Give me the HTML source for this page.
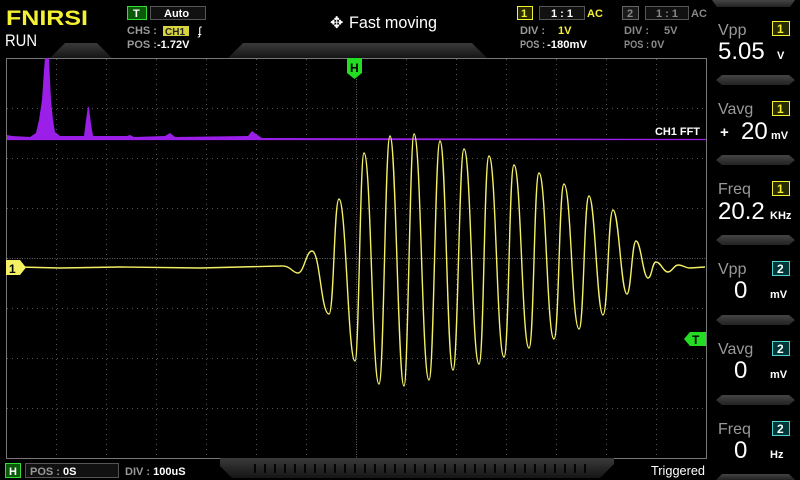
<!DOCTYPE html>
<html><head><meta charset="utf-8"><style>
html,body{margin:0;padding:0;background:#000;width:800px;height:480px;overflow:hidden}
svg{display:block}
text{font-family:"Liberation Sans",sans-serif}
</style></head><body>
<svg width="800" height="480" viewBox="0 0 800 480" xmlns="http://www.w3.org/2000/svg">
<defs>
<linearGradient id="tab" x1="0" y1="0" x2="0" y2="1"><stop offset="0" stop-color="#3a3a3a"/><stop offset="1" stop-color="#151515"/></linearGradient>
<linearGradient id="sep" x1="0" y1="0" x2="0" y2="1"><stop offset="0" stop-color="#444"/><stop offset="1" stop-color="#222"/></linearGradient>
<pattern id="tk" x="0" y="0" width="10" height="20" patternUnits="userSpaceOnUse"><rect x="4" y="4" width="2" height="9" fill="#050505"/></pattern>
</defs>
<rect width="800" height="480" fill="#000"/>
<polygon points="50,58 65,43 97,43 112,58" fill="url(#tab)"/>
<polygon points="228,58 243,43 472,43 487,58" fill="url(#tab)"/>
<polygon points="712,0 795,0 790,7 717,7" fill="url(#sep)"/>
<g stroke="#555" stroke-width="1" stroke-dasharray="1,4">
<line x1="56.5" y1="59" x2="56.5" y2="458"/><line x1="106.5" y1="59" x2="106.5" y2="458"/><line x1="156.5" y1="59" x2="156.5" y2="458"/><line x1="206.5" y1="59" x2="206.5" y2="458"/><line x1="256.5" y1="59" x2="256.5" y2="458"/><line x1="306.5" y1="59" x2="306.5" y2="458"/><line x1="406.5" y1="59" x2="406.5" y2="458"/><line x1="456.5" y1="59" x2="456.5" y2="458"/><line x1="506.5" y1="59" x2="506.5" y2="458"/><line x1="556.5" y1="59" x2="556.5" y2="458"/><line x1="606.5" y1="59" x2="606.5" y2="458"/><line x1="656.5" y1="59" x2="656.5" y2="458"/>
<line x1="7" y1="108.5" x2="706" y2="108.5"/><line x1="7" y1="158.5" x2="706" y2="158.5"/><line x1="7" y1="208.5" x2="706" y2="208.5"/><line x1="7" y1="308.5" x2="706" y2="308.5"/><line x1="7" y1="358.5" x2="706" y2="358.5"/><line x1="7" y1="408.5" x2="706" y2="408.5"/>
</g>
<g stroke="#666" stroke-width="1" stroke-dasharray="1,1.5">
<line x1="356.5" y1="59" x2="356.5" y2="458"/><line x1="7" y1="258.5" x2="706" y2="258.5"/>
</g>
<rect x="6.5" y="58.5" width="700" height="400" fill="none" stroke="#777" stroke-width="1"/>
<polygon points="7,139 7,135 12,136 30,137 36,133 39,120 42,100 44,70 45,58 49,58 50,80 51,100 53,120 55,132 60,136 84,136 86,120 88,106 89,108 91,124 93,136 127,136 130,135 134,137 165,136 170,133 175,137 248,136 252,131 256,134 262,138 706,139 706,140 7,140" fill="#9b1fe8"/>
<line x1="7" y1="139.5" x2="706" y2="139.5" stroke="#9b1fe8" stroke-width="1.3"/>
<text x="655" y="135" fill="#fff" font-size="11" font-weight="bold" textLength="45">CH1 FFT</text>
<path fill="none" stroke="#f4f064" stroke-width="1.4" d="M18 267 L60 268 L120 267 L200 268 L280 266 C291 265 292 273 298 273 C304 273 306 251 312 251 C320 251 321 314 329 314 C334 314 334 199 339 199 C346 199 348 361 355 361 C359 361 360 153 364 153 C371 153 372 384 379 384 C384 384 385 136 390 136 C396 136 398 386 404 386 C408 386 410 134 414 134 C421 134 422 380 429 380 C434 380 435 141 440 141 C446 141 447 370 453 370 C458 370 459 149 464 149 C471 149 472 364 479 364 C484 364 484 156 489 156 C496 156 497 357 504 357 C509 357 509 165 514 165 C521 165 522 348 529 348 C534 348 534 173 539 173 C546 173 547 339 554 339 C559 339 559 184 564 184 C571 184 572 329 579 329 C584 329 584 196 589 196 C595 196 597 315 603 315 C608 315 608 210 613 210 C619 210 621 294 627 294 C631 294 632 241 636 241 C641 241 643 278 648 278 C652 278 652 262 656 262 C661 262 663 272 668 272 C672 272 674 265 678 265 C683 265 685 268 690 268 L705 267"/>
<polygon points="6,260 20,260 26,267.5 20,275 6,275" fill="#f4f064"/>
<text x="9" y="273" font-size="12" font-weight="bold" fill="#000">1</text>
<polygon points="347,58 362,58 362,73 354.5,79 347,73" fill="#22dd22"/>
<text x="350" y="72" font-size="12" font-weight="bold" fill="#000">H</text>
<polygon points="684,339 690,332 706,332 706,346 690,346" fill="#22dd22"/>
<text x="692" y="344" font-size="12" font-weight="bold" fill="#000">T</text>
<text x="6" y="25" font-size="21" font-weight="bold" fill="#f4f032" textLength="82" lengthAdjust="spacingAndGlyphs">FNIRSI</text>
<text x="5" y="46" font-size="17" fill="#fff" textLength="32" lengthAdjust="spacingAndGlyphs">RUN</text>
<rect x="127.5" y="6.5" width="19" height="13" fill="#0a5a0a" stroke="#33dd33"/>
<text x="133" y="17" font-size="11" font-weight="bold" fill="#fff">T</text>
<rect x="150.5" y="6.5" width="55" height="13" fill="#111" stroke="#555"/>
<text x="164" y="17" font-size="11" font-weight="bold" fill="#fff">Auto</text>
<text x="127" y="34" font-size="11" font-weight="bold" fill="#999">CHS :</text>
<rect x="163" y="26" width="26" height="10" fill="#d8d440"/>
<text x="165" y="35" font-size="10" font-weight="bold" fill="#222">CH1</text>
<text x="198" y="35" font-size="12" fill="#fff">ʄ</text>
<text x="127" y="48" font-size="11" font-weight="bold" fill="#999">POS :</text>
<text x="157" y="48" font-size="11" font-weight="bold" fill="#fff">-1.72V</text>
<text x="330" y="28" font-size="16" fill="#fff">✥</text>
<text x="349" y="28" font-size="17" fill="#fff" textLength="88" lengthAdjust="spacingAndGlyphs">Fast moving</text>
<rect x="517.5" y="6.5" width="15" height="13" fill="#2a2a00" stroke="#f4f032"/>
<text x="521" y="17" font-size="11" font-weight="bold" fill="#f4f032">1</text>
<rect x="539.5" y="6.5" width="45" height="13" fill="#111" stroke="#555"/>
<text x="551" y="17" font-size="11" font-weight="bold" fill="#fff">1 : 1</text>
<text x="587" y="17" font-size="11" font-weight="bold" fill="#f4f032">AC</text>
<text x="520" y="34" font-size="11" font-weight="bold" fill="#999">DIV :</text>
<text x="558" y="34" font-size="11" font-weight="bold" fill="#f4f032">1V</text>
<text x="520" y="48" font-size="11" font-weight="bold" fill="#999" textLength="25" lengthAdjust="spacingAndGlyphs">POS :</text>
<text x="547" y="48" font-size="11" font-weight="bold" fill="#fff" textLength="40" lengthAdjust="spacingAndGlyphs">-180mV</text>
<rect x="622.5" y="6.5" width="16" height="13" fill="#1a1a1a" stroke="#666"/>
<text x="627" y="17" font-size="11" font-weight="bold" fill="#888">2</text>
<rect x="645.5" y="6.5" width="43" height="13" fill="#111" stroke="#555"/>
<text x="656" y="17" font-size="11" font-weight="bold" fill="#888">1 : 1</text>
<text x="691" y="17" font-size="11" font-weight="bold" fill="#888">AC</text>
<text x="624" y="34" font-size="11" font-weight="bold" fill="#888">DIV :</text>
<text x="664" y="34" font-size="11" font-weight="bold" fill="#888">5V</text>
<text x="624" y="48" font-size="11" font-weight="bold" fill="#888" textLength="25" lengthAdjust="spacingAndGlyphs">POS :</text>
<text x="651" y="48" font-size="11" font-weight="bold" fill="#888">0V</text>
<g font-size="16" fill="#999">
<text x="718" y="35">Vpp</text><text x="718" y="114">Vavg</text><text x="718" y="194">Freq</text>
<text x="718" y="274">Vpp</text><text x="718" y="354">Vavg</text><text x="718" y="434">Freq</text>
</g>
<g stroke="#f4f032" fill="#2a2a00"><rect x="772.5" y="21.5" width="17" height="14"/><rect x="772.5" y="101.5" width="17" height="14"/><rect x="772.5" y="181.5" width="17" height="14"/></g>
<g stroke="#4ad4d4" fill="#003838"><rect x="772.5" y="261.5" width="17" height="14"/><rect x="772.5" y="341.5" width="17" height="14"/><rect x="772.5" y="421.5" width="17" height="14"/></g>
<g font-size="12" font-weight="bold" fill="#f4f032"><text x="777" y="33">1</text><text x="777" y="113">1</text><text x="777" y="193">1</text></g>
<g font-size="12" font-weight="bold" fill="#fff"><text x="777" y="273">2</text><text x="777" y="353">2</text><text x="777" y="433">2</text></g>
<g font-size="24" fill="#fff">
<text x="718" y="59">5.05</text>
<text x="741" y="139">20</text>
<text x="718" y="219">20.2</text>
<text x="734" y="298">0</text>
<text x="734" y="378">0</text>
<text x="734" y="458">0</text>
</g>
<g font-size="11" font-weight="bold" fill="#fff">
<text x="777" y="59">V</text>
<text x="720" y="137" font-size="15">+</text>
<text x="771" y="139">mV</text>
<text x="770" y="219">KHz</text>
<text x="770" y="298">mV</text>
<text x="770" y="378">mV</text>
<text x="770" y="458">Hz</text>
</g>
<g fill="url(#sep)">
<polygon points="716,80 722,75 789,75 795,80 789,85 722,85"/>
<polygon points="716,160 722,155 789,155 795,160 789,165 722,165"/>
<polygon points="716,240 722,235 789,235 795,240 789,245 722,245"/>
<polygon points="716,320 722,315 789,315 795,320 789,325 722,325"/>
<polygon points="716,400 722,395 789,395 795,400 789,405 722,405"/>
<polygon points="716,480 722,474 789,474 795,480"/>
</g>
<polygon points="220,458 614,458 614,464 600,478 232,478 220,466" fill="url(#tab)"/>
<rect x="247" y="459" width="345" height="17" fill="url(#tk)"/>
<rect x="5.5" y="463.5" width="15" height="14" fill="#0a5a0a" stroke="#33dd33"/>
<text x="9" y="475" font-size="11" font-weight="bold" fill="#fff">H</text>
<rect x="25.5" y="463.5" width="93" height="14" fill="#111" stroke="#555"/>
<text x="30" y="475" font-size="11" font-weight="bold" fill="#999">POS : <tspan fill="#fff">0S</tspan></text>
<text x="125" y="475" font-size="11" font-weight="bold" fill="#999">DIV : <tspan fill="#fff">100uS</tspan></text>
<text x="651" y="475" font-size="13" fill="#fff" textLength="54" lengthAdjust="spacingAndGlyphs">Triggered</text>
</svg>
</body></html>
